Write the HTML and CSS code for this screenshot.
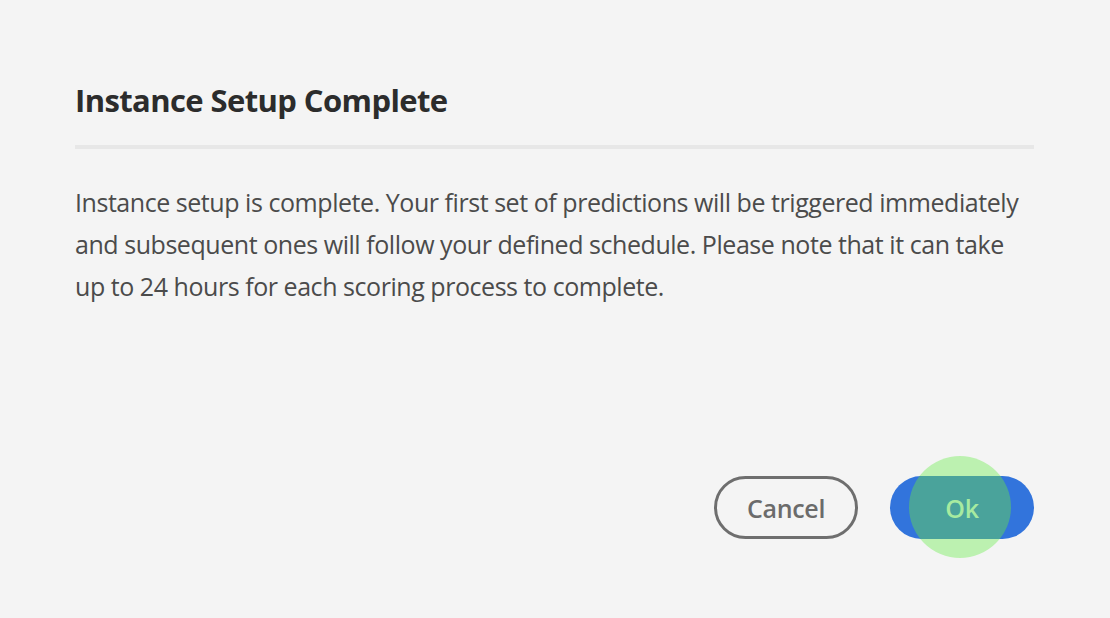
FILE: index.html
```html
<!DOCTYPE html>
<html lang="en">
<head>
<meta charset="utf-8">
<title>Instance Setup Complete</title>
<link rel="stylesheet" href="styles.css">
</head>
<body>
<div class="dialog">
  <h2 class="dialog-title">Instance Setup Complete</h2>
  <hr class="dialog-divider">
  <p class="dialog-body">Instance setup is complete. Your first set of predictions will be triggered immediately and subsequent ones will follow your defined schedule. Please note that it can take up to 24 hours for each scoring process to complete.</p>
  <div class="dialog-footer">
    <button class="btn btn-secondary" type="button">Cancel</button>
    <div class="btn-wrap">
      <span class="ripple-outer"></span>
      <button class="btn btn-primary" type="button"><span class="ripple-inner"></span><span class="btn-label">Ok</span></button>
    </div>
  </div>
</div>
</body>
</html>
```
FILE: styles.css
```css
html, body {
  margin: 0;
  padding: 0;
  background: #f4f4f4;
}
body {
  font-family: "Open Sans", "Liberation Sans", sans-serif;
  width: 1110px;
  height: 618px;
  overflow: hidden;
}
.dialog {
  padding: 80px 76px 0 75px;
  display: flex;
  flex-direction: column;
}
.dialog-title {
  margin: 0;
  font-size: 31px;
  line-height: 40px;
  font-weight: 700;
  letter-spacing: -0.6px;
  color: #2c2c2c;
}
.dialog-divider {
  margin: 25px 0 0 0;
  border: 0;
  height: 4px;
  background: #e7e7e7;
}
.dialog-body {
  margin: 32px 0 0 0;
  font-size: 25px;
  line-height: 42px;
  letter-spacing: -0.45px;
  color: #4b4b4b;
}
.dialog-footer {
  margin-top: 169px;
  display: flex;
  justify-content: flex-end;
  gap: 32px;
}
.btn {
  width: 144px;
  height: 63px;
  border-radius: 32px;
  font-family: inherit;
  font-size: 25px;
  font-weight: 600;
  letter-spacing: -0.3px;
  cursor: pointer;
  padding: 0;
}
.btn-secondary {
  background: transparent;
  border: 3px solid #6e6e6e;
  color: #6b6b6b;
}
.btn-wrap {
  position: relative;
  width: 144px;
  height: 63px;
}
.btn-primary {
  position: relative;
  border: 0;
  background: #3274dc;
  color: #a7eba0;
  overflow: hidden;
  display: block;
}
.ripple-outer, .ripple-inner {
  position: absolute;
  width: 102px;
  height: 102px;
  border-radius: 50%;
}
.ripple-outer {
  left: 19px;
  top: -20px;
  background: #bcf1b0;
}
.ripple-inner {
  left: 19px;
  top: -20px;
  background: #4aa39b;
}
.btn-label {
  position: relative;
}
```
